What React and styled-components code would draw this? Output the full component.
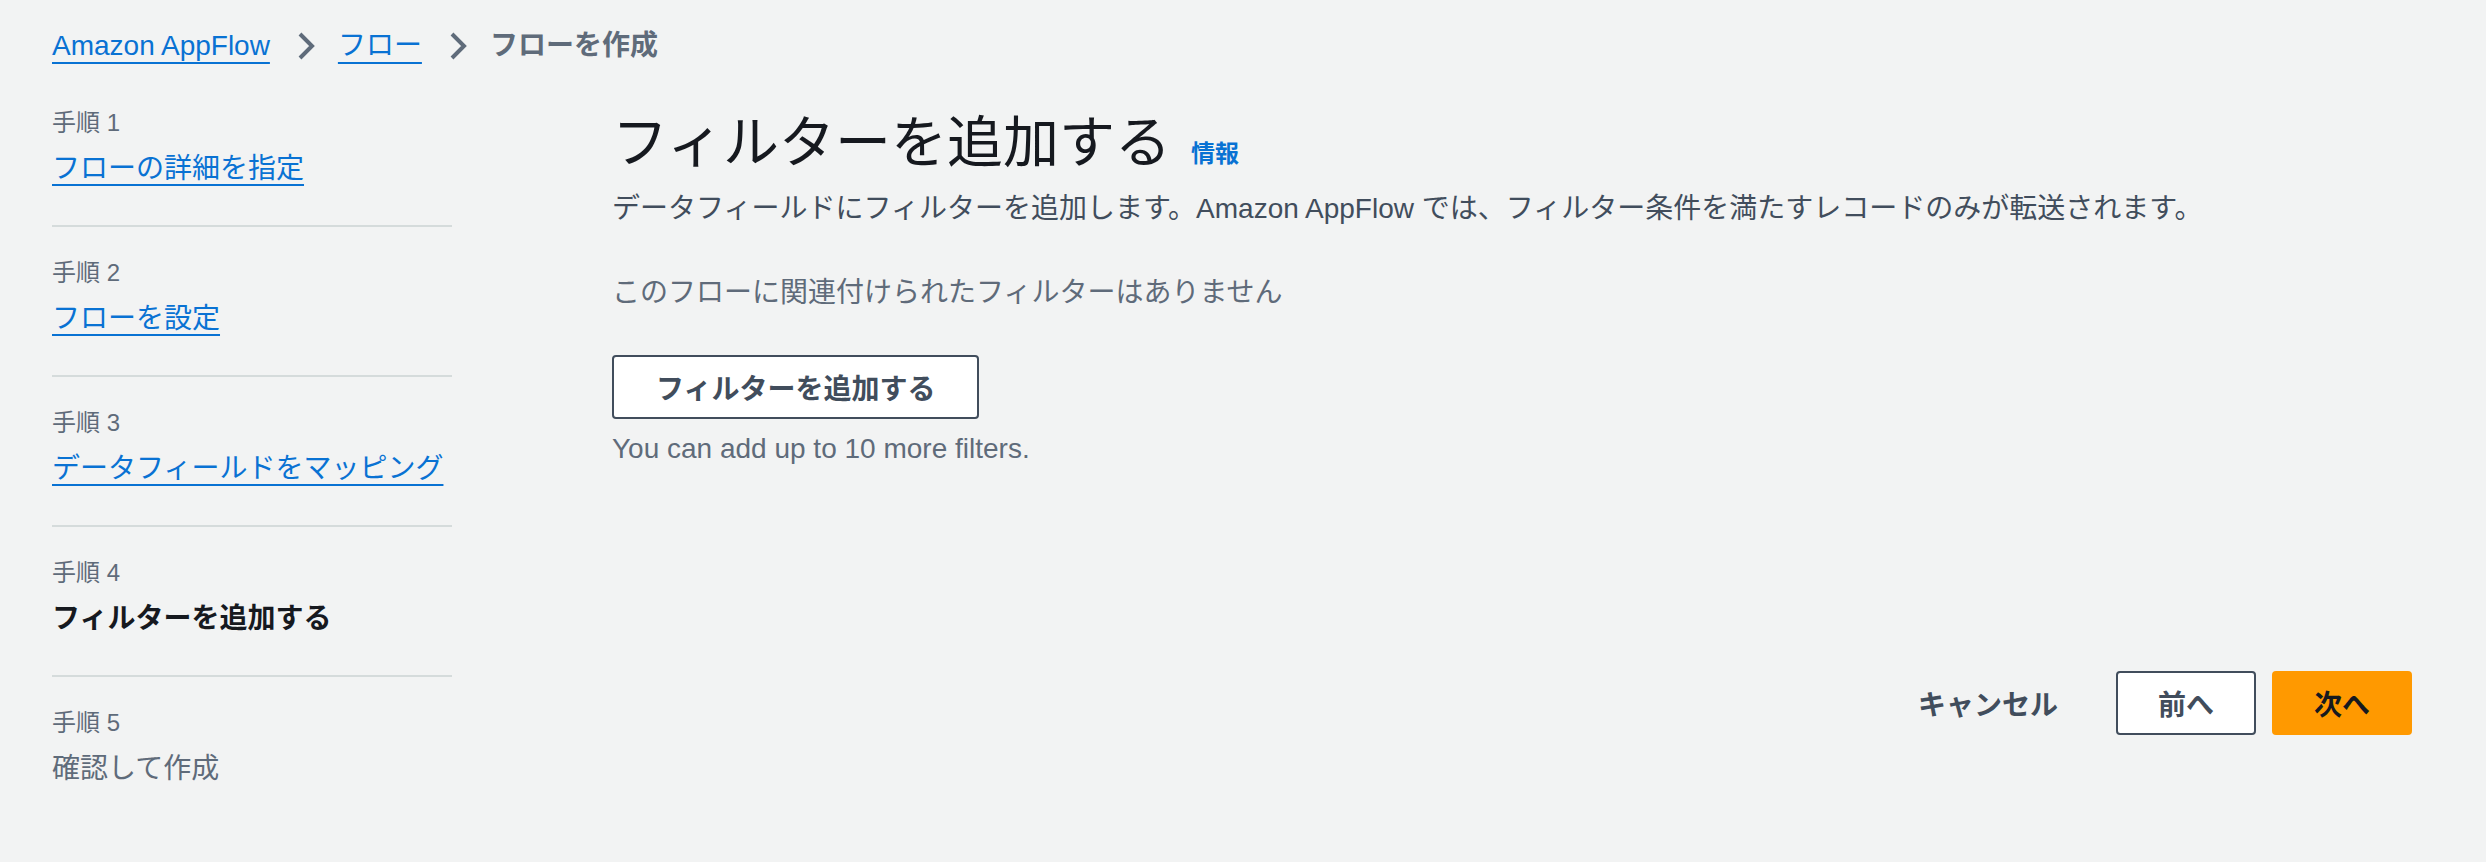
import React from "react";
import styled, { createGlobalStyle } from "styled-components";

const GlobalStyle = createGlobalStyle`
  html, body {
    margin: 0;
    padding: 0;
    background: #f2f3f3;
    min-height: 100vh;
  }
  body {
    font-family: "Liberation Sans", "Noto Sans CJK JP", sans-serif;
    font-size: 28px;
    line-height: 44px;
    color: #16191f;
  }
`;

const Page = styled.div`
  padding: 24px 74px 0 52px;
`;

const Breadcrumbs = styled.nav`
  display: flex;
  align-items: center;
  height: 44px;
`;

const Crumb = styled.a`
  color: #0972d3;
  text-decoration: underline;
  text-decoration-thickness: 2px;
  text-underline-offset: 7px;
  cursor: pointer;
`;

const CurrentCrumb = styled.span`
  color: #5f6b7a;
  font-weight: 700;
`;

const Chevron = styled.svg`
  width: 32px;
  height: 32px;
  margin: 0 16px 0 20px;
  flex: none;
`;

const Layout = styled.div`
  display: grid;
  grid-template-columns: 400px 1fr;
  column-gap: 160px;
  margin-top: 9px;
`;

const Steps = styled.ul`
  list-style: none;
  margin: 0;
  padding: 0;
`;

const Step = styled.li`
  padding: 30px 0 34px;
  border-bottom: 2px solid #d5dbdb;

  &:last-child {
    border-bottom: none;
  }
`;

const StepLabel = styled.div`
  font-size: 24px;
  line-height: 32px;
  color: #5f6b7a;
`;

const StepTitle = styled.div`
  margin-top: 8px;
  font-size: 28px;
  line-height: 44px;
  color: ${(props) =>
    props.$state === "link"
      ? "#0972d3"
      : props.$state === "active"
      ? "#16191f"
      : "#5f6b7a"};
  font-weight: ${(props) => (props.$state === "active" ? 700 : 400)};

  & a {
    color: inherit;
    text-decoration: underline;
    text-decoration-thickness: 2px;
    text-underline-offset: 6px;
    cursor: pointer;
  }
`;

const Content = styled.main`
  padding-top: 30px;
`;

const TitleRow = styled.div`
  display: flex;
  align-items: baseline;
`;

const Title = styled.h1`
  margin: 0;
  font-size: 56px;
  line-height: 72px;
  font-weight: 400;
  color: #16191f;
`;

const InfoLink = styled.a`
  margin-left: 20px;
  font-size: 24px;
  font-weight: 700;
  color: #0972d3;
  cursor: pointer;
`;

const Text = styled.p`
  margin: ${(props) => props.$top || 0}px 0 0;
  color: ${(props) => props.$color || "#414d5c"};
`;

const Button = styled.button`
  display: inline-flex;
  align-items: center;
  justify-content: center;
  height: 64px;
  padding: 0 ${(props) => props.$pad || 40}px;
  margin-top: ${(props) => props.$top || 0}px;
  font-family: inherit;
  font-size: 28px;
  font-weight: 700;
  border-radius: 4px;
  border: 2px solid
    ${(props) =>
      props.$variant === "primary"
        ? "#ff9900"
        : props.$variant === "link"
        ? "transparent"
        : "#414d5c"};
  background: ${(props) =>
    props.$variant === "primary"
      ? "#ff9900"
      : props.$variant === "link"
      ? "transparent"
      : "#ffffff"};
  color: ${(props) => (props.$variant === "primary" ? "#16191f" : "#414d5c")};
  cursor: pointer;
`;

const Actions = styled.div`
  display: flex;
  justify-content: flex-end;
  gap: 16px;
  margin-top: 200px;
`;

function ChevronIcon() {
  return (
    <Chevron viewBox="0 0 16 16" aria-hidden="true">
      <path d="M5 2l6 6-6 6" fill="none" stroke="#5f6b7a" strokeWidth="2" />
    </Chevron>
  );
}

const steps = [
  { label: "手順 1", title: "フローの詳細を指定", state: "link" },
  { label: "手順 2", title: "フローを設定", state: "link" },
  { label: "手順 3", title: "データフィールドをマッピング", state: "link" },
  { label: "手順 4", title: "フィルターを追加する", state: "active" },
  { label: "手順 5", title: "確認して作成", state: "disabled" },
];

export default function App() {
  return (
    <>
      <GlobalStyle />
      <Page>
        <Breadcrumbs>
          <Crumb>Amazon AppFlow</Crumb>
          <ChevronIcon />
          <Crumb>フロー</Crumb>
          <ChevronIcon />
          <CurrentCrumb>フローを作成</CurrentCrumb>
        </Breadcrumbs>
        <Layout>
          <Steps>
            {steps.map((s) => (
              <Step key={s.label}>
                <StepLabel>{s.label}</StepLabel>
                <StepTitle $state={s.state}>
                  {s.state === "link" ? <a>{s.title}</a> : s.title}
                </StepTitle>
              </Step>
            ))}
          </Steps>
          <Content>
            <TitleRow>
              <Title>フィルターを追加する</Title>
              <InfoLink>情報</InfoLink>
            </TitleRow>
            <Text $top={8}>
              データフィールドにフィルターを追加します。Amazon AppFlow
              では、フィルター条件を満たすレコードのみが転送されます。
            </Text>
            <Text $top={40} $color="#5f6b7a">
              このフローに関連付けられたフィルターはありません
            </Text>
            <Button $top={40} $pad={42}>
              フィルターを追加する
            </Button>
            <Text $top={8} $color="#5f6b7a">
              You can add up to 10 more filters.
            </Text>
            <Actions>
              <Button $variant="link">キャンセル</Button>
              <Button $variant="normal">前へ</Button>
              <Button $variant="primary">次へ</Button>
            </Actions>
          </Content>
        </Layout>
      </Page>
    </>
  );
}
